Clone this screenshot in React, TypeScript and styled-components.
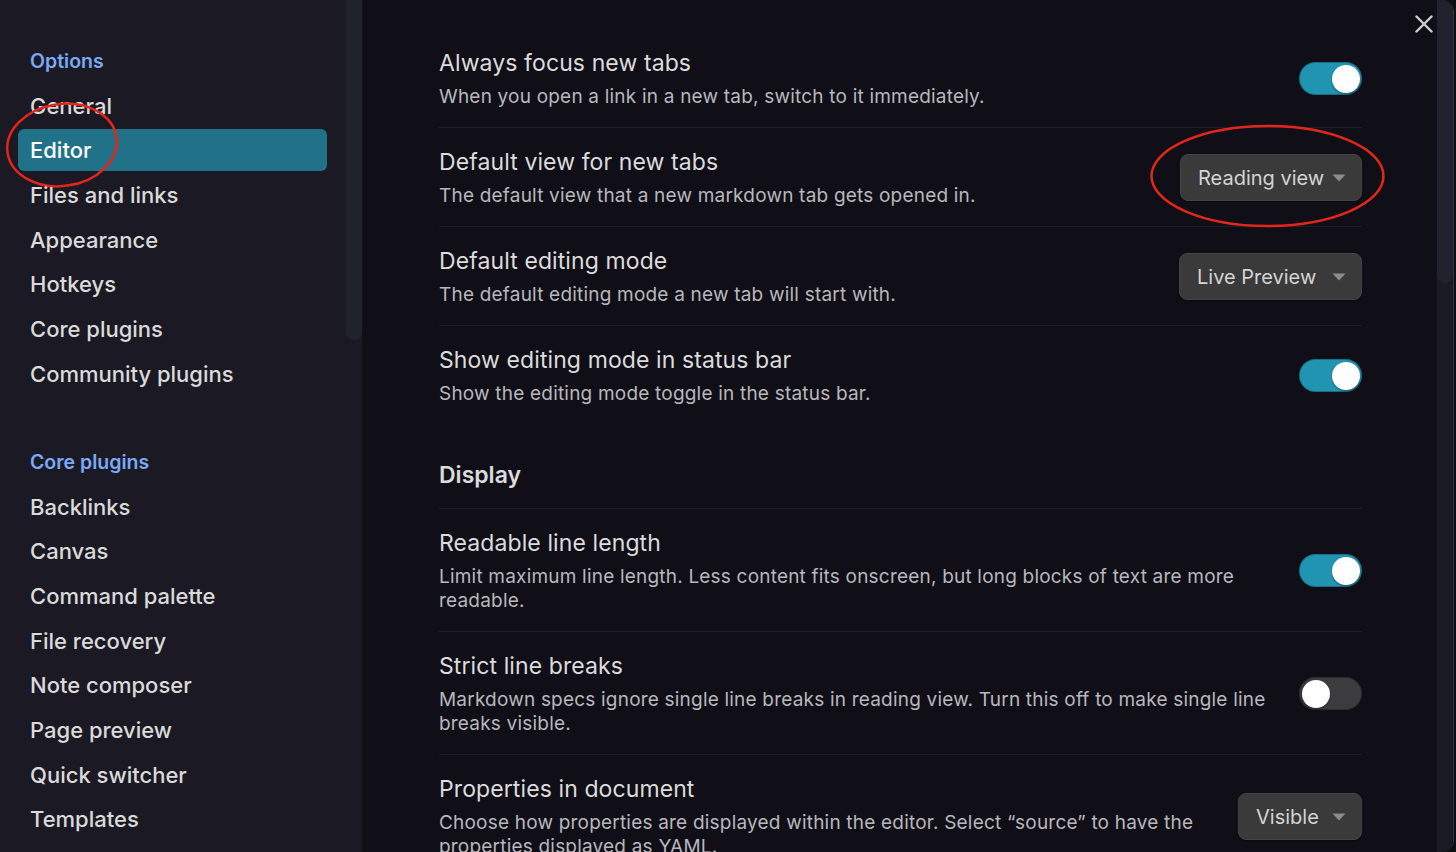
import styled, { createGlobalStyle } from 'styled-components';

const GlobalStyle = createGlobalStyle`
  html, body {
    margin: 0;
    padding: 0;
    background: #0d0e12;
    overflow: hidden;
  }
  * {
    box-sizing: border-box;
  }
`;

const Screen = styled.div`
  width: 1456px;
  height: 852px;
  display: flex;
  background: #0d0e12;
  font-family: Inter, 'Noto Sans', sans-serif;
`;

const Modal = styled.div`
  width: 1454px;
  height: 852px;
  display: flex;
  overflow: hidden;
  border-radius: 0 12px 12px 0;
  border-right: 1px solid #34363d;
`;

const Sidebar = styled.div`
  width: 363px;
  flex-shrink: 0;
  display: flex;
  background: #1b1a24;
  border-right: 1px solid #121119;
`;

const SideNav = styled.nav`
  flex: 1;
  padding: 40px 19px 0 18px;
  display: flex;
  flex-direction: column;
`;

const NavGroup = styled.div`
  display: flex;
  flex-direction: column;
  gap: 2.7px;
  & + & {
    margin-top: 46px;
  }
`;

const GroupLabel = styled.div`
  height: 42px;
  padding-left: 12px;
  display: flex;
  align-items: center;
  font-size: 19.5px;
  font-weight: 600;
  color: #7ba9f6;
`;

const NavItem = styled.div<{ $active?: boolean }>`
  position: relative;
  height: 42px;
  padding-left: 12px;
  display: flex;
  align-items: center;
  border-radius: 6px;
  font-size: 22px;
  font-weight: 500;
  color: ${({ $active }) => ($active ? '#ffffff' : '#dadada')};
  background: ${({ $active }) => ($active ? '#217189' : 'transparent')};
`;

const ScrollTrack = styled.div<{ $thumb: number }>`
  width: 16px;
  flex-shrink: 0;
  display: flex;
  flex-direction: column;
  background: ${({ $thumb }) => ($thumb > 300 ? 'transparent' : '#1a1a22')};

  &::before {
    content: '';
    display: block;
    height: ${({ $thumb }) => $thumb}px;
    border-radius: 0 0 8px 8px;
    background: #20232e;
  }
`;

const Content = styled.div`
  flex: 1;
  display: flex;
  background: #100f18;
`;

const Main = styled.div`
  position: relative;
  flex: 1;
  padding: 29px 75px 0 76px;
  display: flex;
  flex-direction: column;
`;

const CloseButton = styled.div`
  position: absolute;
  top: 15px;
  right: 4px;
  width: 18px;
  height: 18px;
  display: flex;
`;

const SettingRow = styled.div`
  display: flex;
  align-items: center;
  padding: 19px 0 18px;
  & + & {
    border-top: 1px solid #1c1f2a;
  }
`;

const Info = styled.div`
  flex: 1;
  margin-right: 22px;
`;

const Title = styled.div`
  font-size: 23px;
  line-height: 30px;
  letter-spacing: 0.1px;
  color: #dcdcdc;
`;

const Desc = styled.div`
  margin-top: 7px;
  font-size: 19px;
  line-height: 24px;
  letter-spacing: 0.2px;
  color: #b8b8bc;
`;

const Heading = styled.div`
  padding: 36px 0 18px;
  font-size: 23px;
  line-height: 30px;
  font-weight: 600;
  color: #dcdcdc;
  border-bottom: 1px solid #1c1f2a;
`;

const Toggle = styled.div<{ $on?: boolean }>`
  width: 63px;
  height: 33px;
  flex-shrink: 0;
  padding: 2.5px;
  border-radius: 17px;
  display: flex;
  justify-content: ${({ $on }) => ($on ? 'flex-end' : 'flex-start')};
  background: ${({ $on }) => ($on ? '#2194b2' : '#3c3c3e')};
  box-shadow: inset 0 0 0 1px rgba(0, 0, 0, 0.25);

  &::after {
    content: '';
    width: 28px;
    height: 28px;
    border-radius: 50%;
    background: #ffffff;
    box-shadow: 0 1px 2px rgba(0, 0, 0, 0.4);
  }
`;

const Dropdown = styled.div<{ $width: number }>`
  position: relative;
  flex-shrink: 0;
  width: ${({ $width }) => $width}px;
  height: 47px;
  padding: 0 15px 0 17px;
  display: flex;
  align-items: center;
  justify-content: space-between;
  border-radius: 8px;
  background: #3a3a3a;
  border: 1px solid #444444;
  box-shadow: 0 1px 2px rgba(0, 0, 0, 0.5);
  font-size: 20px;
  color: #d4d4d4;
`;

const Ring = styled.svg`
  position: absolute;
  overflow: visible;
  pointer-events: none;
`;

const Caret = () => (
  <svg width="14" height="8" viewBox="0 0 14 8">
    <path d="M0.5 0.5 L13.5 0.5 L7 7.5 Z" fill="#8b8b8b" />
  </svg>
);

type Control =
  | { kind: 'toggle'; on: boolean }
  | { kind: 'select'; value: string; width: number; ring?: boolean };

type Setting = { title: string; desc: string; control: Control };

const general: Setting[] = [
  {
    title: 'Always focus new tabs',
    desc: 'When you open a link in a new tab, switch to it immediately.',
    control: { kind: 'toggle', on: true },
  },
  {
    title: 'Default view for new tabs',
    desc: 'The default view that a new markdown tab gets opened in.',
    control: { kind: 'select', value: 'Reading view', width: 182, ring: true },
  },
  {
    title: 'Default editing mode',
    desc: 'The default editing mode a new tab will start with.',
    control: { kind: 'select', value: 'Live Preview', width: 183 },
  },
  {
    title: 'Show editing mode in status bar',
    desc: 'Show the editing mode toggle in the status bar.',
    control: { kind: 'toggle', on: true },
  },
];

const display: Setting[] = [
  {
    title: 'Readable line length',
    desc: 'Limit maximum line length. Less content fits onscreen, but long blocks of text are more readable.',
    control: { kind: 'toggle', on: true },
  },
  {
    title: 'Strict line breaks',
    desc: 'Markdown specs ignore single line breaks in reading view. Turn this off to make single line breaks visible.',
    control: { kind: 'toggle', on: false },
  },
  {
    title: 'Properties in document',
    desc: 'Choose how properties are displayed within the editor. Select \u201csource\u201d to have the properties displayed as YAML.',
    control: { kind: 'select', value: 'Visible', width: 124 },
  },
];

const options = ['General', 'Editor', 'Files and links', 'Appearance', 'Hotkeys', 'Core plugins', 'Community plugins'];
const corePlugins = [
  'Backlinks',
  'Canvas',
  'Command palette',
  'File recovery',
  'Note composer',
  'Page preview',
  'Quick switcher',
  'Templates',
];

const renderControl = (c: Control) => {
  if (c.kind === 'toggle') return <Toggle $on={c.on} />;
  return (
    <Dropdown $width={c.width}>
      {c.value}
      <Caret />
      {c.ring && (
        <Ring style={{ left: -31, top: -30 }} width="235" height="102">
          <ellipse cx="117.5" cy="51" rx="116" ry="50" fill="none" stroke="#e3261b" strokeWidth="2.5" />
        </Ring>
      )}
    </Dropdown>
  );
};

const renderRows = (rows: Setting[]) =>
  rows.map((s) => (
    <SettingRow key={s.title}>
      <Info>
        <Title>{s.title}</Title>
        <Desc>{s.desc}</Desc>
      </Info>
      {renderControl(s.control)}
    </SettingRow>
  ));

export default function App() {
  return (
    <Screen>
      <GlobalStyle />
      <Modal>
        <Sidebar>
          <SideNav>
            <NavGroup>
              <GroupLabel>Options</GroupLabel>
              {options.map((o) => (
                <NavItem key={o} $active={o === 'Editor'}>
                  {o}
                  {o === 'Editor' && (
                    <Ring style={{ left: -12, top: -26 }} width="112" height="84">
                      <ellipse
                        cx="56"
                        cy="42"
                        rx="55"
                        ry="41"
                        fill="none"
                        stroke="#e3261b"
                        strokeWidth="2.5"
                        transform="rotate(-8 56 42)"
                      />
                    </Ring>
                  )}
                </NavItem>
              ))}
            </NavGroup>
            <NavGroup>
              <GroupLabel>Core plugins</GroupLabel>
              {corePlugins.map((o) => (
                <NavItem key={o}>{o}</NavItem>
              ))}
            </NavGroup>
          </SideNav>
          <ScrollTrack $thumb={340} />
        </Sidebar>
        <Content>
          <Main>
            <CloseButton>
              <svg width="18" height="18" viewBox="0 0 18 18">
                <path d="M1.5 1.5 L16.5 16.5 M16.5 1.5 L1.5 16.5" stroke="#cfcfcf" strokeWidth="2.4" strokeLinecap="round" />
              </svg>
            </CloseButton>
            <div>{renderRows(general)}</div>
            <Heading>Display</Heading>
            <div>{renderRows(display)}</div>
          </Main>
          <ScrollTrack $thumb={283} />
        </Content>
      </Modal>
    </Screen>
  );
}
